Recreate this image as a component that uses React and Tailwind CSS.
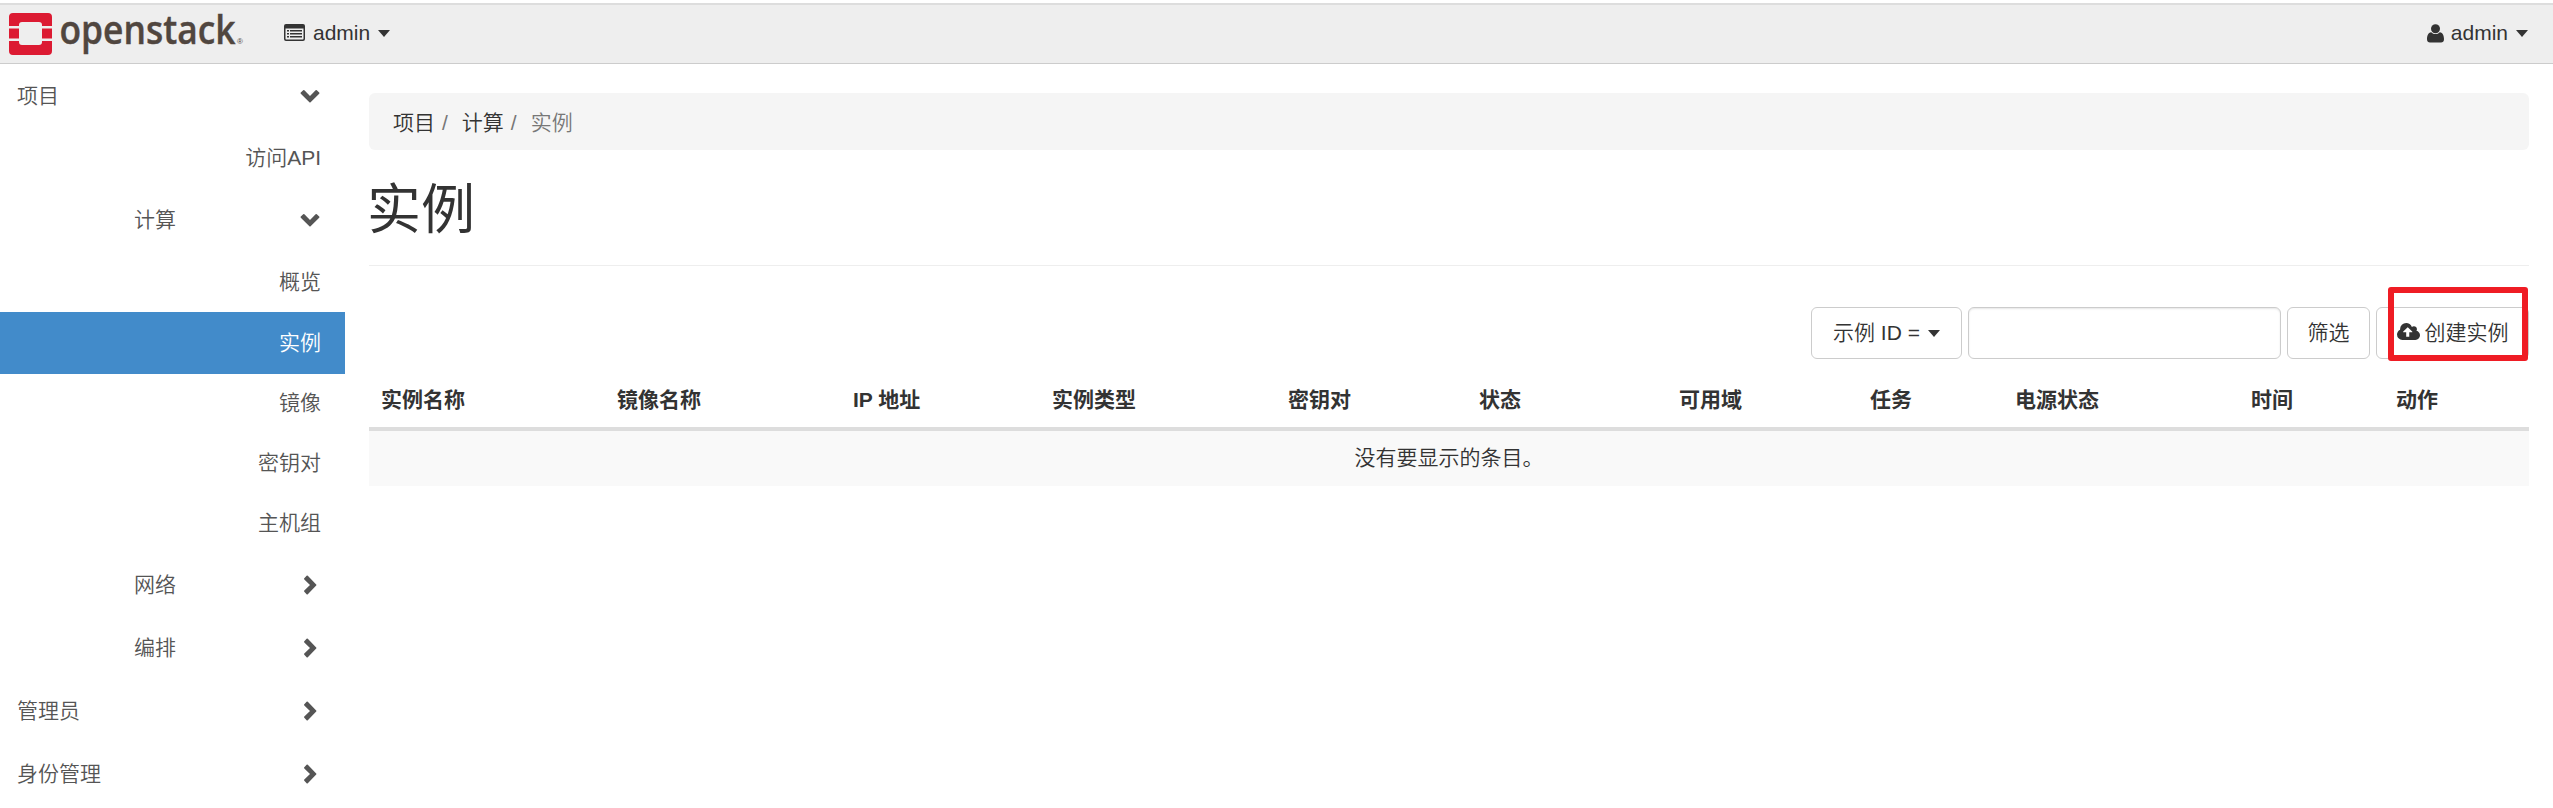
import React from "react";

const navItems = [
  { label: "项目", kind: "root", open: true, height: "h-16" },
  { label: "访问API", kind: "leaf", height: "h-[60px]" },
  { label: "计算", kind: "group", open: true, height: "h-16" },
  { label: "概览", kind: "leaf", height: "h-[60px]" },
  { label: "实例", kind: "leaf", active: true, height: "h-[62px]" },
  { label: "镜像", kind: "leaf", height: "h-[58px]" },
  { label: "密钥对", kind: "leaf", height: "h-[61px]" },
  { label: "主机组", kind: "leaf", height: "h-[60px]" },
  { label: "网络", kind: "group", height: "h-16" },
  { label: "编排", kind: "group", height: "h-[62px]" },
  { label: "管理员", kind: "root", height: "h-[63px]" },
  { label: "身份管理", kind: "root", height: "h-[63px]" },
];

const columns = [
  ["实例名称", "w-[236px]"],
  ["镜像名称", "w-[236px]"],
  ["IP 地址", "w-[199px]"],
  ["实例类型", "w-[236px]"],
  ["密钥对", "w-[191px]"],
  ["状态", "w-[200px]"],
  ["可用域", "w-[191px]"],
  ["任务", "w-[145px]"],
  ["电源状态", "w-[236px]"],
  ["时间", "w-[145px]"],
  ["动作", "w-[145px]"],
];

function Caret() {
  return (
    <svg className="h-[7px] w-3 shrink-0" viewBox="0 0 12 7" fill="currentColor">
      <path d="M0 0h12L6 7z" />
    </svg>
  );
}

function Chevron({ open }) {
  return (
    <svg className={`size-5 shrink-0 ${open ? "rotate-90" : ""}`} viewBox="0 0 20 20" fill="currentColor">
      <path d="M4.300 3.200 6.600.8q.6-.6 1.200 0l8.400 8.600q.6.600 0 1.200l-8.400 8.600q-.6.600-1.200 0l-2.300-2.400q-.6-.6 0-1.200L10 10 4.300 4.400q-.6-.6 0-1.200z" />
    </svg>
  );
}

function Logo() {
  return (
    <svg className="mb-px ml-2 h-14 w-60 shrink-0 overflow-visible" viewBox="0 0 240 56">
      <g fill="#dc1a32">
        <path d="M1 20V11a4 4 0 0 1 4-4h35a4 4 0 0 1 4 4v9h-10v-1a3 3 0 0 0-3-3H14a3 3 0 0 0-3 3v1z" />
        <path d="M1 22.500h10v10H1zM34 22.500h10v10H34z" />
        <path d="M1 35v10a4 4 0 0 0 4 4h35a4 4 0 0 0 4-4V35H34v1a3 3 0 0 1-3 3H14a3 3 0 0 1-3-3v-1z" />
      </g>
      <text x="51.500" y="38" textLength="176" lengthAdjust="spacingAndGlyphs" strokeWidth="0.4" className="fill-[#50463f] stroke-[#50463f] font-['Open_Sans',sans-serif] text-[39px] font-semibold">
        openstack
      </text>
      <text x="229" y="38" className="fill-[#50463f] font-['Liberation_Sans',sans-serif] text-[8px]">®</text>
    </svg>
  );
}

function ListIcon() {
  return (
    <svg className="mb-0.5 h-[17px] w-[21px]" viewBox="0 0 21 17" fill="currentColor">
      <path fillRule="evenodd" d="M2 0h17a2 2 0 0 1 2 2v13a2 2 0 0 1-2 2H2a2 2 0 0 1-2-2V2a2 2 0 0 1 2-2zM1.500 4.500v10.500l.5.5h17l.5-.5V4.500z" />
      <path d="M3 6h2v1.500H3zM6 6h12v1.500H6zM3 9h2v1.500H3zM6 9h12v1.500H6zM3 12h2v1.500H3zM6 12h12v1.500H6z" />
    </svg>
  );
}

function UserIcon() {
  return (
    <svg className="h-[19px] w-[17px]" viewBox="0 0 17 19" fill="currentColor">
      <circle cx="8.500" cy="4.700" r="4.500" />
      <path d="M4.200 8.200C1 8.700 0 12 0 15.300 0 17.500 1.300 18.600 3 18.600h11c1.700 0 3-1.100 3-3.300 0-3.300-1-6.600-4.200-7.100C11.600 9.500 10.200 10 8.500 10s-3.100-.5-4.300-1.800z" />
    </svg>
  );
}

function CloudIcon() {
  return (
    <svg className="mb-1 h-[17px] w-[23px] shrink-0" viewBox="0 0 1920 1408">
      <path
        fill="currentColor"
        d="M1280 736q0-14-9-23L919 361q-9-9-23-9t-23 9L522 712q-10 12-10 24 0 14 9 23t23 9h224v352q0 13 9.500 22.500t22.500 9.500h192q13 0 22.500-9.500t9.500-22.500V768h224q13 0 22.500-9.500t9.500-22.500zm640 288q0 159-112.500 271.500T1536 1408H448q-185 0-316.500-131.500T0 960q0-130 70-240t188-165q-2-30-2-43 0-212 150-362T768 0q156 0 285.500 87T1242 318q71-62 166-62 106 0 181 75t75 181q0 76-41 138 130 31 213.500 135.500T1920 1024z"
      />
    </svg>
  );
}

function NavItem({ item }) {
  if (item.kind === "leaf") {
    return (
      <a className={`flex items-center justify-end pr-6 ${item.height} ${item.active ? "bg-[#428bca] text-white" : ""}`}>
        {item.label}
      </a>
    );
  }
  return (
    <a className={`flex items-center justify-between pr-[25px] ${item.height} ${item.kind === "root" ? "pl-[17px]" : "pl-[134px]"}`}>
      {item.label}
      <Chevron open={item.open} />
    </a>
  );
}

export default function App() {
  return (
    <div className="h-[808px] w-[2553px] overflow-hidden bg-white pt-[3px] font-['Liberation_Sans','Noto_Sans_CJK_SC',sans-serif] text-[21px] leading-[30px] text-[#333]">
      <header className="flex h-[61px] items-center border-t-2 border-b border-t-[#ddd] border-b-[#ccc] bg-[#eee]">
        <Logo />
        <div className="mb-0.5 ml-9 flex items-center">
          <ListIcon />
          <span className="mr-2 ml-2">admin</span>
          <Caret />
        </div>
        <div className="mb-0.5 ml-auto flex items-center pr-[25px]">
          <UserIcon />
          <span className="mr-2 ml-[7px]">admin</span>
          <Caret />
        </div>
      </header>
      <div className="flex">
        <nav className="w-[345px] shrink-0 font-['Liberation_Sans','Noto_Sans_CJK_SC_DemiLight','Noto_Sans_CJK_SC',sans-serif] font-[350] text-[#555]">
          {navItems.map((item) => (
            <NavItem key={item.label} item={item} />
          ))}
        </nav>
        <main className="ml-6 w-[2160px] pt-[29px] font-['Liberation_Sans','Noto_Sans_CJK_SC_DemiLight','Noto_Sans_CJK_SC',sans-serif]">
          <div className="flex h-[57px] items-center rounded-md bg-[#f5f5f5] pt-0.5 pl-6 font-[350]">
            <span>项目</span>
            <span className="ml-[7px] text-[#777]">/</span>
            <span className="ml-[14px]">计算</span>
            <span className="ml-[7px] text-[#777]">/</span>
            <span className="ml-[14px] text-[#777]">实例</span>
          </div>
          <h1 className="flex h-[116px] items-center border-b border-[#eee] pb-1 font-['Noto_Sans_CJK_SC',sans-serif] text-[54px] leading-[60px] font-normal">
            <span className="-ml-0.5">实例</span>
          </h1>
          <div className="mt-[41px] flex h-[52px] justify-end gap-1.5 font-[350]">
            <button className="flex w-[151px] items-center justify-center gap-2 rounded-md border border-[#ccc]">
              <span className="whitespace-nowrap">示例 ID =</span>
              <Caret />
            </button>
            <input className="w-[313px] rounded-md border border-[#ccc] shadow-[inset_0_1px_2px_rgba(0,0,0,0.1)]" />
            <button className="w-[83px] rounded-md border border-[#ccc]">筛选</button>
            <button className="relative flex w-[153px] items-center justify-center gap-[5px] rounded-md border border-[#ccc]">
              <CloudIcon />
              <span>创建实例</span>
              <span className="absolute -top-[21px] right-0 h-[74px] w-[140px] rounded-[3px] border-6 border-[#ef1c24]" />
            </button>
          </div>
          <table className="mt-3 w-[2160px] table-fixed border-separate border-spacing-0 font-['Liberation_Sans','Noto_Sans_CJK_SC',sans-serif]">
            <thead>
              <tr>
                {columns.map(([name, width]) => (
                  <th key={name} className={`h-[60px] border-b-4 border-[#ddd] px-3 pt-0.5 pb-0 text-left font-bold ${width}`}>{name}</th>
                ))}
              </tr>
            </thead>
            <tbody>
              <tr className="bg-[#f9f9f9]">
                <td colSpan={11} className="h-[55px] p-0 pb-0.5 text-center font-['Liberation_Sans','Noto_Sans_CJK_SC_DemiLight','Noto_Sans_CJK_SC',sans-serif] font-[350]">
                  没有要显示的条目。
                </td>
              </tr>
            </tbody>
          </table>
        </main>
      </div>
    </div>
  );
}
